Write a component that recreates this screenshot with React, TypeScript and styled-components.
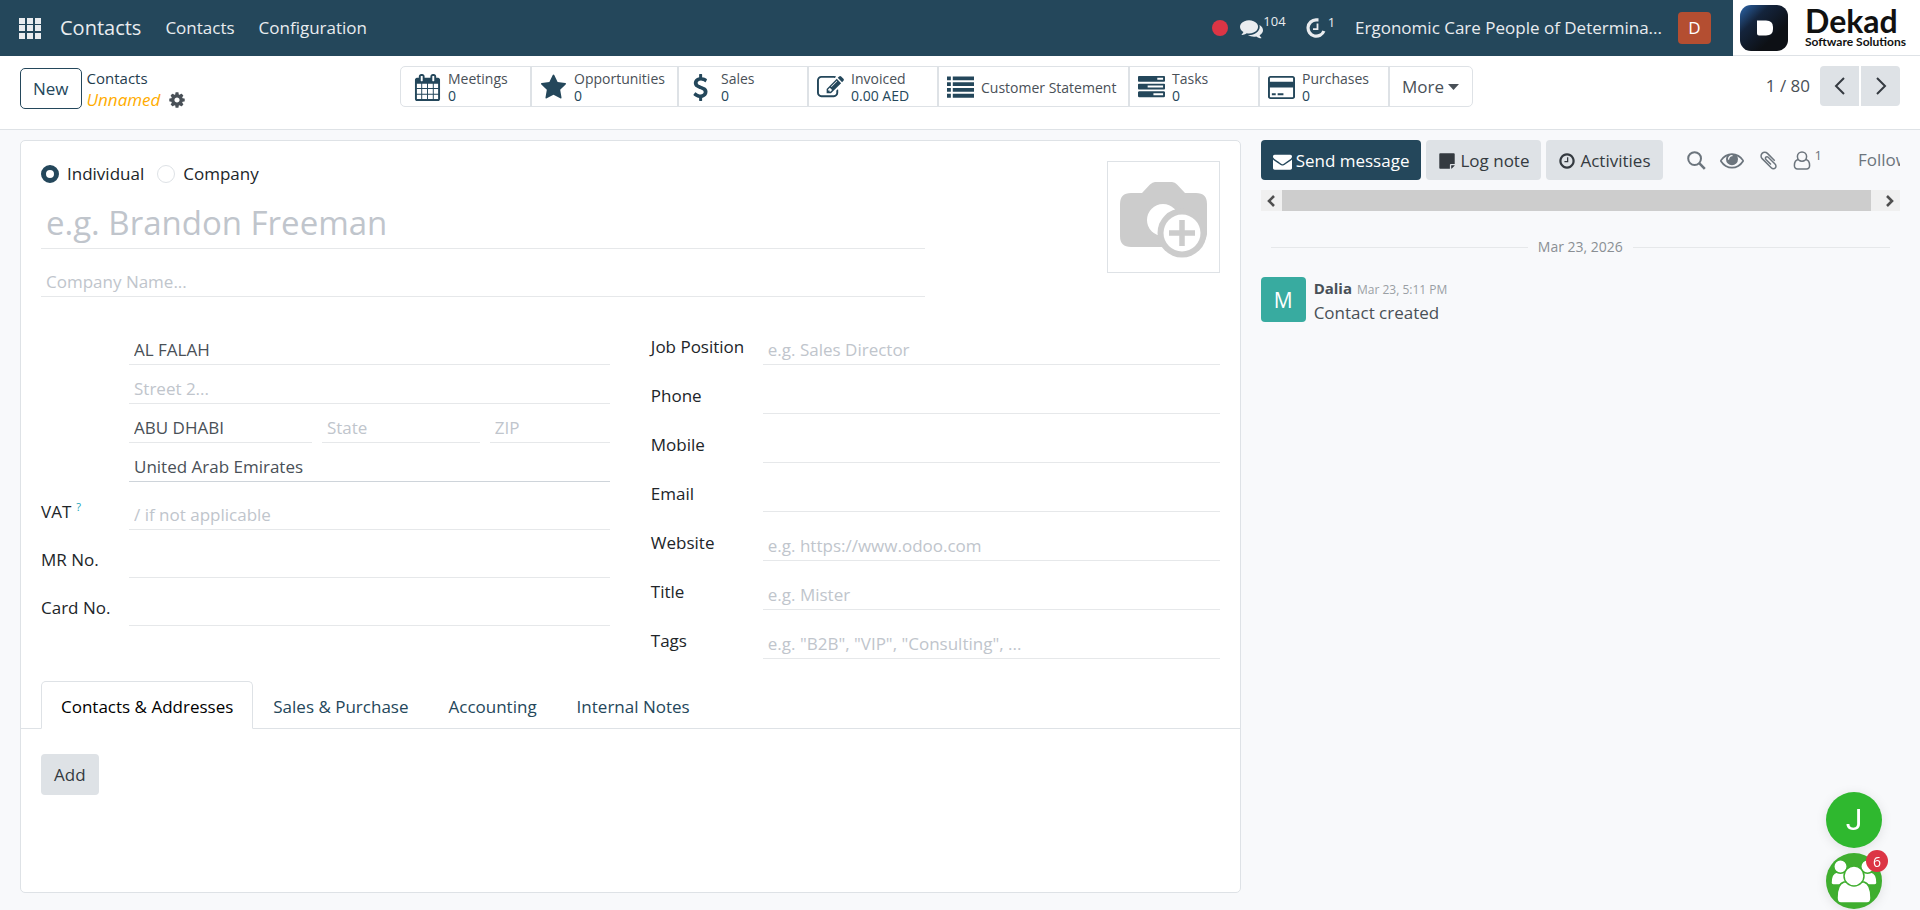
import React, { useState } from "react";
import styled, { createGlobalStyle } from "styled-components";

const GlobalStyle = createGlobalStyle`
  *, *::before, *::after { box-sizing: border-box; }
  body {
    margin: 0;
    background: #f8f9fb;
    color: #495057;
    font-family: "Open Sans", "Noto Sans", sans-serif;
    font-size: 17px;
    line-height: 24px;
  }
  button, input { font: inherit; color: inherit; }
  button { cursor: pointer; }
  a { color: inherit; text-decoration: none; }
`;

const brand = "#24475b";
const line = "#e6e8ea";
const border = "#dee2e6";

/* ---------- icons ---------- */

const paths = {
  calendar:
    "M192 1664h288v-288h-288v288zm352 0h320v-288h-320v288zm-352-352h288v-320h-288v320zm352 0h320v-320h-320v320zm-352-384h288v-288h-288v288zm736 736h320v-288h-320v288zm-384-736h320v-288h-320v288zm768 736h288v-288h-288v288zm-384-352h320v-320h-320v320zm-352-864v-288q0-13-9.5-22.5t-22.5-9.5h-64q-13 0-22.5 9.5t-9.5 22.5v288q0 13 9.5 22.5t22.5 9.5h64q13 0 22.5-9.5t9.5-22.5zm736 864h288v-320h-288v320zm-384-384h320v-288h-320v288zm384 0h288v-288h-288v288zm32-480v-288q0-13-9.5-22.5t-22.5-9.5h-64q-13 0-22.5 9.5t-9.5 22.5v288q0 13 9.5 22.5t22.5 9.5h64q13 0 22.5-9.5t9.5-22.5zm384-64v1280q0 52-38 90t-90 38h-1408q-52 0-90-38t-38-90v-1280q0-52 38-90t90-38h128v-96q0-66 47-113t113-47h64q66 0 113 47t47 113v96h384v-96q0-66 47-113t113-47h64q66 0 113 47t47 113v96h128q52 0 90 38t38 90z",
  star:
    "M1728 647q0 22-26 48l-363 354 86 500q1 7 1 20 0 21-10.5 35.5t-30.5 14.5q-19 0-40-12l-449-236-449 236q-22 12-40 12-21 0-31.5-14.5t-10.5-35.5q0-6 2-20l86-500-364-354q-25-27-25-48 0-37 56-46l502-73 225-455q19-41 49-41t49 41l225 455 502 73q56 9 56 46z",
  dollar:
    "M1362 1185q0 153-99.5 263.5t-258.5 136.5v175q0 14-9 23t-23 9h-135q-13 0-22.5-9.5t-9.5-22.5v-175q-66-9-127.5-31t-101.5-44.5-74-48-46.5-37.5-17.5-18q-17-21-2-41l103-135q7-10 23-12 15-2 24 9l2 2q113 99 243 125 37 8 74 8 81 0 142.5-43t61.5-122q0-28-15-53t-33.5-42-58.5-37.5-66-32-80-32.5q-39-16-61.5-25t-61.5-26.5-62.5-31-56.5-35.5-53.5-42.5-43.5-49-35.5-58-21-66.5-8.5-78q0-138 98-242t255-134v-180q0-13 9.5-22.5t22.5-9.5h135q14 0 23 9t9 23v176q57 6 110.5 23t87 33.5 63.5 37.5 39 29 15 14q17 18 5 38l-81 146q-8 15-23 16-14 3-27-7-3-3-14.5-12t-39-26.5-58.5-32-74.5-26-85.5-11.5q-95 0-155 43t-60 111q0 26 8.5 48t29.5 41.5 39.5 33 56 31 60.5 27 70 27.5q53 20 81 31.5t76 35 75.5 42.5 62 50 53 63.5 31.5 76.5 13 94z",
  edit:
    "M888 1184l116-116-152-152-116 116v56h96v96h56zm440-720q-16-16-33 1l-350 350q-17 17-1 33t33-1l350-350q17-17 1-33zm80 594v190q0 119-84.5 203.5t-203.5 84.5h-832q-119 0-203.5-84.5t-84.5-203.5v-832q0-119 84.5-203.5t203.5-84.5h832q63 0 117 25 15 7 18 23 3 17-9 29l-49 49q-14 14-32 8-23-6-45-6h-832q-66 0-113 47t-47 113v832q0 66 47 113t113 47h832q66 0 113-47t47-113v-126q0-13 9-22l64-64q15-15 35-7t20 29zm-96-738l288 288-672 672h-288v-288zm444 132l-92 92-288-288 92-92q28-28 68-28t68 28l152 152q28 28 28 68t-28 68z",
  list:
    "M0 160h256v256h-256zM384 160h1408v256h-1408zM0 544h256v256h-256zM384 544h1408v256h-1408zM0 928h256v256h-256zM384 928h1408v256h-1408zM0 1312h256v256h-256zM384 1312h1408v256h-1408z",
  tasks:
    "M1024 1408h640v-128h-640v128zm-384-512h1024v-128h-1024v128zm640-512h384v-128h-384v128zm512 832v256q0 26-19 45t-45 19h-1664q-26 0-45-19t-19-45v-256q0-26 19-45t45-19h1664q26 0 45 19t19 45zm0-512v256q0 26-19 45t-45 19h-1664q-26 0-45-19t-19-45v-256q0-26 19-45t45-19h1664q26 0 45 19t19 45zm0-512v256q0 26-19 45t-45 19h-1664q-26 0-45-19t-19-45v-256q0-26 19-45t45-19h1664q26 0 45 19t19 45z",
  card:
    "M1632 128q66 0 113 47t47 113v1216q0 66-47 113t-113 47h-1472q-66 0-113-47t-47-113v-1216q0-66 47-113t113-47h1472zm-1472 128q-13 0-22.5 9.5t-9.5 22.5v224h1536v-224q0-13-9.5-22.5t-22.5-9.5h-1472zm1472 1280q13 0 22.5-9.5t9.5-22.5v-608h-1536v608q0 13 9.5 22.5t22.5 9.5h1472zm-1376-128v-128h256v128h-256zm384 0v-128h384v128h-384z",
  gear:
    "M1152 896q0-106-75-181t-181-75-181 75-75 181 75 181 181 75 181-75 75-181zm512-109v222q0 12-8 23t-20 13l-185 28q-19 54-39 91 35 50 107 138 10 12 10 25t-9 23q-27 37-99 108t-94 71q-12 0-26-9l-138-108q-44 23-91 38-16 136-29 186-7 28-36 28h-222q-14 0-24.5-8.5t-11.5-21.5l-28-184q-49-16-90-37l-141 107q-10 9-25 9-14 0-25-11-126-114-165-168-7-10-7-23 0-12 8-23 15-21 51-66.5t54-70.5q-27-50-41-99l-183-27q-13-2-21-12.5t-8-23.5v-222q0-12 8-23t19-13l186-28q14-46 39-92-40-57-107-138-10-12-10-24 0-10 9-23 26-36 98.5-107.5t94.5-71.5q13 0 26 10l138 107q44-23 91-38 16-136 29-186 7-28 36-28h222q14 0 24.5 8.5t11.5 21.5l28 184q49 16 90 37l142-107q9-9 24-9 13 0 25 10 129 119 165 170 7 8 7 22 0 12-8 23-15 21-51 66.5t-54 70.5q26 50 41 98l183 28q13 2 21 12.5t8 23.5z",
  comments:
    "M1408 768q0 139-94 257t-256.5 186.5-353.5 68.5q-86 0-176-16-124 88-278 128-36 9-86 16h-3q-11 0-20.5-8t-11.5-21q-1-3-1-6.5t.5-6.5 2-6l2.5-5 3.5-5.5 4-5 4.5-5 4-4.5q5-6 23-25t26-29.5 22.5-29 25-38.5 20.5-44q-124-72-195-177t-71-224q0-139 94-257t256.5-186.5 353.5-68.5 353.5 68.5 256.5 186.5 94 257zm384 256q0 120-71 224.5t-195 176.5q10 24 20.5 44t25 38.5 22.5 29 26 29.5 23 25q1 1 4 4.5t4.5 5 4 5 3.5 5.5l2.5 5 2 6 .5 6.5-1 6.5q-3 14-13 22t-22 7q-50-7-86-16-154-40-278-128-90 16-176 16-271 0-472-132 58 4 88 4 161 0 309-45t264-129q125-92 192-212t67-254q0-77-23-152 129 71 204 178t75 230z",
  envelope:
    "M1792 710v794q0 66-47 113t-113 47h-1472q-66 0-113-47t-47-113v-794q44 49 101 87 362 246 497 345 57 42 92.5 65.5t94.5 48 110 24.5h2q51 0 110-24.5t94.5-48 92.5-65.5q170-123 498-345 57-39 100-87zm0-294q0 79-49 151t-122 123q-376 261-468 325-10 7-42.5 31t-54 38.5-52 32.5-57.5 27-50 9h-2q-23 0-50-9t-57.5-27-52-32.5-54-38.5-42.5-31q-91-64-262-182.5t-205-142.5q-62-42-117-115.5t-55-136.5q0-78 41.5-130t118.5-52h1472q65 0 112.5 47t47.5 113z",
  note:
    "M224 128h1344q40 0 68 28t28 68v960h-384q-40 0-68 28t-28 68v384h-960q-40 0-68-28t-28-68v-1344q0-40 28-68t68-28zM1312 1312h350q-8 56-40 90l-222 222q-34 32-88 40z",
  clock:
    "M1024 544v448q0 14-9 23t-23 9h-320q-14 0-23-9t-9-23v-64q0-14 9-23t23-9h224v-352q0-14 9-23t23-9h64q14 0 23 9t9 23zm416 352q0-148-73-273t-198-198-273-73-273 73-198 198-73 273 73 273 198 198 273 73 273-73 198-198 73-273zm224 0q0 209-103 385.5t-279.5 279.5-385.5 103-385.5-103-279.5-279.5-103-385.5 103-385.5 279.5-279.5 385.5-103 385.5 103 279.5 279.5 103 385.5z",
  eye:
    "M1664 960q-152-236-381-353 61 104 61 225 0 185-131.5 316.5t-316.5 131.5-316.5-131.5-131.5-316.5q0-121 61-225-229 117-381 353 133 205 333.5 326.5t434.5 121.5 434.5-121.5 333.5-326.5zm-720-384q0-20-14-34t-34-14q-125 0-214.5 89.5t-89.5 214.5q0 20 14 34t34 14 34-14 14-34q0-86 61-147t147-61q20 0 34-14t14-34zm848 384q0 34-20 69-140 230-376.5 368.5t-499.5 138.5-499.5-139-376.5-368q-20-35-20-69t20-69q140-229 376.5-368t499.5-139 499.5 139 376.5 368q20 35 20 69z",
  clip:
    "M1596 1385q0 117-79 196t-196 79q-135 0-235-100l-777-776q-113-115-113-271 0-159 110-270t269-111q158 0 273 113l605 606q10 10 10 22 0 16-30.5 46.5t-46.5 30.5q-13 0-23-10l-606-607q-79-77-181-77-106 0-179 75t-73 181q0 105 76 181l776 777q63 63 145 63 64 0 106-42t42-106q0-82-63-145l-581-581q-26-24-60-24-29 0-48 19t-19 48q0 32 25 59l410 410q10 10 10 22 0 16-31 47t-47 31q-12 0-22-10l-410-410q-63-61-63-149 0-82 57-139t139-57q88 0 149 63l581 581q100 98 100 235z",
};

type IconName = keyof typeof paths;

const Svg = styled.svg`
  display: block;
  flex: none;
`;

const Icon = ({ name, size }: { name: IconName; size: number }) => (
  <Svg width={size} height={size} viewBox="0 0 1792 1792" fill="currentColor" aria-hidden="true">
    <path d={paths[name]} />
  </Svg>
);

const AppsIcon = () => (
  <Svg width="22" height="21" viewBox="0 0 22 21" fill="#e9ecef" aria-hidden="true">
    {[0, 8, 16].map((x) => [0, 7, 15].map((y) => <rect key={`${x}-${y}`} x={x} y={y} width="6" height="6" />))}
  </Svg>
);

const ActivityIcon = () => (
  <Svg width="20" height="20" viewBox="0 0 20 20" fill="none" stroke="currentColor" aria-hidden="true">
    <path d="M12.500 1.800H10A8.200 8.200 0 1 0 17.900 13" strokeWidth="3.2" />
    <path d="M11.500 5.500V11.200H7" strokeWidth="1.800" />
  </Svg>
);

const SearchIcon = () => (
  <Svg width="19" height="19" viewBox="0 0 19 19" fill="none" stroke="currentColor" strokeWidth="2" aria-hidden="true">
    <circle cx="7.6" cy="7.6" r="6.4" />
    <path d="M12.2 12.2l5.6 5.6" strokeWidth="2.6" />
  </Svg>
);

const UserIcon = () => (
  <Svg width="18" height="19" viewBox="0 0 18 19" fill="none" stroke="currentColor" strokeWidth="1.5" aria-hidden="true">
    <circle cx="9" cy="5.6" r="4.6" />
    <path d="M5.4 8.6C2.6 9 1.4 11.600 1.400 14.600C1.400 16.800 2.600 18 4.600 18H13.400C15.400 18 16.600 16.800 16.600 14.600C16.600 11.600 15.400 9 12.600 8.600" />
  </Svg>
);

const Chevron = ({ dir }: { dir: "left" | "right" }) => (
  <Svg width="12" height="18" viewBox="0 0 12 18" fill="none" stroke="#343a40" strokeWidth="2" aria-hidden="true">
    <path d={dir === "left" ? "M10 1L2 9l8 8" : "M2 1l8 8-8 8"} />
  </Svg>
);

const ScrollArrow = ({ dir }: { dir: "left" | "right" }) => (
  <Svg width="8" height="12" viewBox="0 0 8 12" fill="none" stroke="#4f4f4f" strokeWidth="2.600" aria-hidden="true">
    <path d={dir === "left" ? "M7 1L2 6l5 5" : "M1 1l5 5-5 5"} />
  </Svg>
);

const Caret = () => (
  <Svg width="11" height="6" viewBox="0 0 11 6" fill="currentColor" aria-hidden="true">
    <path d="M0 0h11L5.500 6z" />
  </Svg>
);

const CameraIcon = () => (
  <Svg width="88" height="76" viewBox="0 0 88 76" aria-hidden="true">
    <path
      d="M11 11H22L30 2.500Q32.500 0 35 0H52Q55 0 57 2.500L65 11H76Q87 11 87 22V52A25 25 0 0 1 44 65H11Q0 65 0 54V22Q0 11 11 11Z"
      fill="#ccc"
    />
    <circle cx="43" cy="38" r="16" fill="#fff" />
    <circle cx="62" cy="51" r="24.500" fill="#ccc" />
    <circle cx="62" cy="51" r="18.500" fill="#fff" />
    <path d="M62 38V64M49 51H75" stroke="#ccc" strokeWidth="5.500" />
  </Svg>
);

const LogoMark = () => (
  <Svg width="48" height="46" viewBox="0 0 48 46" aria-hidden="true">
    <defs>
      <linearGradient id="mark" x1="0" y1="0" x2="0.700" y2="0.700">
        <stop offset="0" stopColor="#2c66ab" />
        <stop offset="0.450" stopColor="#14243c" />
        <stop offset="1" stopColor="#0d1015" />
      </linearGradient>
    </defs>
    <rect width="48" height="46" rx="11" fill="url(#mark)" />
    <path d="M17 15.500H26Q33 15.500 33 22V24Q33 30.500 26 30.500H19Q17 30.500 17 28.500Z" fill="#fff" />
  </Svg>
);

const GroupIcon = () => (
  <Svg width="56" height="56" viewBox="0 0 56 56" fill="#fff" stroke="#3fae2f" strokeWidth="1.500" aria-hidden="true">
    <path d="M5 30Q5 20 11 19H20Q24 20 24 26V32H9Q5 32 5 30Z" />
    <path d="M51 30Q51 20 45 19H36Q32 20 32 26V32H47Q51 32 51 30Z" />
    <circle cx="14.500" cy="13.500" r="6.700" />
    <circle cx="41.500" cy="13.500" r="6.700" />
    <path d="M11 45Q11 31 18 29H38Q45 31 45 45Q45 50 41 50H15Q11 50 11 45Z" />
    <circle cx="28" cy="23" r="10" />
  </Svg>
);

/* ---------- page ---------- */

const Page = styled.div`
  display: flex;
  flex-direction: column;
  min-height: 100vh;
`;

const Navbar = styled.header`
  display: flex;
  align-items: stretch;
  height: 56px;
  background: ${brand};
  color: #e9ecef;
`;

const NavLeft = styled.nav`
  display: flex;
  align-items: center;
  flex: 1;
  gap: 24px;
  padding-left: 19px;
`;

const PlainButton = styled.button`
  display: flex;
  align-items: center;
  gap: 4px;
  padding: 0;
  border: 0;
  background: none;
  white-space: nowrap;
`;

const AppName = styled.a`
  margin-left: -5px;
  font-size: 20px;
`;

const NavRight = styled.div`
  display: flex;
  align-items: center;
  gap: 20px;
  padding-right: 22px;
`;

const RecordDot = styled.span`
  width: 16px;
  height: 16px;
  margin-right: -8px;
  border-radius: 50%;
  background: #dc3545;
`;

const Counter = styled(PlainButton)<{ $gap: number }>`
  gap: ${(p) => p.$gap}px;
`;

const Count = styled.span`
  align-self: flex-start;
  margin-top: -3px;
  font-size: 13px;
  line-height: 14px;
`;

const Company = styled.span`
  white-space: nowrap;
`;

const UserBadge = styled.button`
  width: 33px;
  height: 32px;
  margin-left: -4px;
  padding: 0;
  border: 0;
  border-radius: 4px;
  background: #b44e31;
  color: #fff;
`;

const Logo = styled.a`
  display: flex;
  align-items: center;
  gap: 17px;
  width: 187px;
  padding-left: 7px;
  border-bottom: 1px solid ${border};
  background: #fff;
  color: #111;
  font-family: Lato, sans-serif;
`;

const LogoText = styled.span`
  display: flex;
  flex-direction: column;
  font-size: 12px;
  font-weight: 700;
  line-height: 14px;
  white-space: nowrap;
`;

const LogoName = styled.span`
  font-size: 32px;
  line-height: 29px;
`;

/* ---------- control panel ---------- */

const ControlPanel = styled.div`
  display: flex;
  align-items: flex-start;
  height: 74px;
  padding: 10px 20px 0;
  border-bottom: 1px solid ${border};
  background: #fff;
`;

const PanelLeft = styled.div`
  display: flex;
  align-items: center;
  gap: 5px;
  width: 380px;
`;

const NewButton = styled.button`
  height: 41px;
  padding: 1px 12px 0;
  border: 1px solid ${brand};
  border-radius: 5px;
  background: #fff;
  color: ${brand};
`;

const Crumbs = styled.div`
  display: flex;
  flex-direction: column;
  padding-top: 2px;
  font-size: 15px;
  line-height: 21px;
`;

const CrumbLink = styled.a`
  color: #1f3c4e;
`;

const Current = styled.div`
  display: flex;
  align-items: center;
  gap: 8px;
  font-size: 17px;
  em { color: #ffac00; }
`;

const Stats = styled.div`
  display: flex;
  height: 41px;
  border: 1px solid ${border};
  border-radius: 5px;
`;

const StatButton = styled.button<{ $width: number; $inset: number }>`
  display: flex;
  align-items: center;
  gap: 7px;
  width: ${(p) => p.$width}px;
  padding: 1px 0 0 ${(p) => p.$inset}px;
  border: 0;
  border-right: 2px solid ${border};
  background: none;
  color: ${brand};
  font-size: 14px;
  line-height: 17px;
  text-align: left;
  white-space: nowrap;
`;

const StatText = styled.span`
  display: flex;
  flex-direction: column;
  span { color: #495057; }
`;

const MoreButton = styled(PlainButton)`
  padding: 1px 13px 0 12px;
`;

const Pager = styled.div`
  display: flex;
  align-items: center;
  gap: 2px;
  margin-left: auto;
`;

const PagerText = styled.span`
  margin-right: 8px;
`;

const PagerButton = styled.button<{ $side: "left" | "right" }>`
  display: grid;
  place-items: center;
  width: 39px;
  height: 40px;
  padding: 0;
  border: 0;
  border-radius: ${(p) => (p.$side === "left" ? "4px 0 0 4px" : "0 4px 4px 0")};
  background: ${border};
`;

/* ---------- form ---------- */

const Main = styled.main`
  display: grid;
  flex: 1;
  grid-template-columns: minmax(0, 21fr) minmax(0, 11fr);
  gap: 20px;
  padding: 10px 20px 17px;
`;

const Sheet = styled.form`
  display: flex;
  flex-direction: column;
  border: 1px solid ${border};
  border-radius: 5px;
  background: #fff;
`;

const SheetTop = styled.div`
  display: flex;
  align-items: flex-start;
  justify-content: space-between;
  padding: 20px 20px 0;
`;

const TitleBlock = styled.div`
  width: 75%;
`;

const Radios = styled.div`
  display: flex;
  gap: 13px;
  padding-top: 1px;
`;

const RadioLabel = styled.label`
  display: flex;
  align-items: center;
  gap: 8px;
  color: #212529;
`;

const Radio = styled.input`
  appearance: none;
  width: 18px;
  height: 18px;
  margin: 0;
  border: 1px solid ${border};
  border-radius: 50%;
  background: #fff;
  &:checked { border: 5px solid ${brand}; }
`;

const Input = styled.input<{ $strong?: boolean }>`
  display: block;
  width: 100%;
  min-width: 0;
  height: 34px;
  padding: 3px 5px 0;
  border: 0;
  border-bottom: 1px solid ${(p) => (p.$strong ? "#ced4da" : line)};
  background: none;
  outline: none;
  text-overflow: ellipsis;
  &::placeholder { color: #c0c5cc; opacity: 1; }
`;

const NameInput = styled(Input)`
  height: 55px;
  margin: 8px 0 14px;
  font-size: 33px;
`;

const Photo = styled.button`
  display: grid;
  place-items: center;
  width: 113px;
  height: 112px;
  padding: 5px 0 0 2px;
  border: 1px solid ${border};
  background: #fff;
`;

const Groups = styled.div`
  display: grid;
  grid-template-columns: 1fr 1fr;
  gap: 41px;
  padding: 34px 20px 0;
`;

const Group = styled.div<{ $label: number; $gap: number }>`
  display: grid;
  grid-template-columns: ${(p) => p.$label}px minmax(0, 1fr);
  align-content: start;
  align-items: end;
  row-gap: ${(p) => p.$gap}px;
`;

const FieldLabel = styled.label`
  align-self: start;
  padding-top: 4px;
  color: #212529;
  sup {
    margin-left: 5px;
    color: #17a2b8;
    font-size: 11px;
    line-height: 0;
    vertical-align: 7px;
  }
`;

const Address = styled.div`
  display: grid;
  grid-column: 2;
  grid-template-columns: 183fr 158fr 120fr;
  gap: 5px 10px;
`;

const Wide = styled.div`
  grid-column: 1 / -1;
`;

const Tabs = styled.div`
  display: flex;
  margin-top: 22px;
  padding: 0 20px;
  border-bottom: 1px solid ${border};
`;

const Tab = styled.button<{ $active: boolean }>`
  height: 48px;
  margin-bottom: -1px;
  padding: 3px 19px 0;
  border: 1px solid ${(p) => (p.$active ? border : "transparent")};
  border-bottom-color: ${(p) => (p.$active ? "#fff" : "transparent")};
  border-radius: 5px 5px 0 0;
  background: ${(p) => (p.$active ? "#fff" : "none")};
  color: ${(p) => (p.$active ? "#000" : brand)};
`;

const TabBody = styled.div`
  padding: 25px 20px;
`;

const AddButton = styled.button`
  height: 41px;
  padding: 1px 13px 0;
  border: 0;
  border-radius: 4px;
  background: ${border};
  color: #343a40;
`;

/* ---------- chatter ---------- */

const Chatter = styled.aside`
  min-width: 0;
`;

const ChatBar = styled.div`
  display: flex;
  align-items: center;
  gap: 5px;
  overflow: hidden;
  white-space: nowrap;
`;

const ChatButton = styled.button<{ $primary?: boolean }>`
  display: flex;
  flex: none;
  align-items: center;
  gap: 4px;
  height: 40px;
  padding: 2px 12px 0;
  border: 0;
  border-radius: 4px;
  background: ${(p) => (p.$primary ? brand : border)};
  color: ${(p) => (p.$primary ? "#fff" : "#343a40")};
`;

const ChatTools = styled.div`
  display: flex;
  flex: none;
  align-items: center;
  gap: 14px;
  padding-left: 19px;
  color: #6c757d;
`;

const Followers = styled(Counter)`
  margin-right: 22px;
`;

const ScrollBar = styled.div`
  display: flex;
  align-items: center;
  height: 21px;
  margin-top: 10px;
  background: #f0f0f0;
`;

const ScrollEnd = styled.span`
  display: grid;
  flex: none;
  place-items: center;
  width: 21px;
`;

const Thumb = styled.span`
  width: 589px;
  height: 21px;
  margin-right: auto;
  background: #cdcdcd;
`;

const DateLine = styled.div`
  display: flex;
  align-items: center;
  gap: 10px;
  padding: 24px 10px 0;
  color: #8a8f94;
  font-size: 14px;
  &::before, &::after {
    content: "";
    flex: 1;
    height: 1px;
    background: ${line};
  }
`;

const Message = styled.article`
  display: flex;
  gap: 8px;
  margin-top: 18px;
`;

const Avatar = styled.span`
  display: grid;
  place-items: center;
  width: 45px;
  height: 45px;
  border-radius: 4px;
  background: #38aba0;
  color: #fff;
  font-size: 21px;
`;

const MessageHead = styled.div`
  line-height: 22px;
  b { font-size: 15px; }
  time {
    margin-left: 5px;
    color: #9a9fa4;
    font-size: 12px;
  }
`;

/* ---------- chat bubbles ---------- */

const Bubbles = styled.div`
  position: fixed;
  right: 38px;
  bottom: 1px;
  display: flex;
  flex-direction: column;
  gap: 5px;
`;

const Bubble = styled.button<{ $bg: string }>`
  position: relative;
  display: grid;
  place-items: center;
  width: 56px;
  height: 56px;
  padding: 0;
  border: 0;
  border-radius: 50%;
  background: ${(p) => p.$bg};
  box-shadow: 0 2px 12px rgba(0, 0, 0, 0.1);
  color: #fff;
  font-family: Roboto, sans-serif;
  font-size: 30px;
`;

const Badge = styled.span`
  position: absolute;
  top: -3px;
  right: -6px;
  width: 22px;
  height: 22px;
  border-radius: 50%;
  background: #dc3545;
  font-family: "Open Sans", sans-serif;
  font-size: 14px;
  line-height: 23px;
`;

const stats: { icon: IconName; label: string; value?: string; width: number; inset: number }[] = [
  { icon: "calendar", label: "Meetings", value: "0", width: 131, inset: 13 },
  { icon: "star", label: "Opportunities", value: "0", width: 147, inset: 8 },
  { icon: "dollar", label: "Sales", value: "0", width: 130, inset: 8 },
  { icon: "edit", label: "Invoiced", value: "0.00 AED", width: 130, inset: 8 },
  { icon: "list", label: "Customer Statement", width: 191, inset: 8 },
  { icon: "tasks", label: "Tasks", value: "0", width: 130, inset: 8 },
  { icon: "card", label: "Purchases", value: "0", width: 130, inset: 8 },
];

const rightFields = [
  { label: "Job Position", hint: "e.g. Sales Director" },
  { label: "Phone" },
  { label: "Mobile" },
  { label: "Email" },
  { label: "Website", hint: "e.g. https://www.odoo.com" },
  { label: "Title", hint: "e.g. Mister" },
  { label: "Tags", hint: 'e.g. "B2B", "VIP", "Consulting", ...' },
];

const tabs = ["Contacts & Addresses", "Sales & Purchase", "Accounting", "Internal Notes"];

const slug = (text: string) => text.toLowerCase().replace(/\W+/g, "-");

export default function App() {
  const [tab, setTab] = useState(tabs[0]);

  return (
    <Page>
      <GlobalStyle />
      <Navbar>
        <NavLeft>
          <PlainButton aria-label="Apps">
            <AppsIcon />
          </PlainButton>
          <AppName href="#">Contacts</AppName>
          <a href="#">Contacts</a>
          <a href="#">Configuration</a>
        </NavLeft>
        <NavRight>
          <RecordDot />
          <Counter $gap={0} aria-label="Messages">
            <Icon name="comments" size={23} />
            <Count>104</Count>
          </Counter>
          <Counter $gap={2} aria-label="Activities">
            <ActivityIcon />
            <Count>1</Count>
          </Counter>
          <Company>Ergonomic Care People of Determina...</Company>
          <UserBadge>D</UserBadge>
        </NavRight>
        <Logo href="#">
          <LogoMark />
          <LogoText>
            <LogoName>Dekad</LogoName>
            Software Solutions
          </LogoText>
        </Logo>
      </Navbar>

      <ControlPanel>
        <PanelLeft>
          <NewButton>New</NewButton>
          <Crumbs>
            <CrumbLink href="#">Contacts</CrumbLink>
            <Current>
              <em>Unnamed</em>
              <PlainButton aria-label="Actions">
                <Icon name="gear" size={18} />
              </PlainButton>
            </Current>
          </Crumbs>
        </PanelLeft>
        <Stats>
          {stats.map((s) => (
            <StatButton key={s.label} $width={s.width} $inset={s.inset}>
              <Icon name={s.icon} size={27} />
              <StatText>
                <span>{s.label}</span>
                {s.value}
              </StatText>
            </StatButton>
          ))}
          <MoreButton>
            More <Caret />
          </MoreButton>
        </Stats>
        <Pager>
          <PagerText>1 / 80</PagerText>
          <PagerButton $side="left" aria-label="Previous">
            <Chevron dir="left" />
          </PagerButton>
          <PagerButton $side="right" aria-label="Next">
            <Chevron dir="right" />
          </PagerButton>
        </Pager>
      </ControlPanel>

      <Main>
        <Sheet onSubmit={(e) => e.preventDefault()}>
          <SheetTop>
            <TitleBlock>
              <Radios>
                <RadioLabel>
                  <Radio type="radio" name="kind" defaultChecked />
                  Individual
                </RadioLabel>
                <RadioLabel>
                  <Radio type="radio" name="kind" />
                  Company
                </RadioLabel>
              </Radios>
              <NameInput aria-label="Name" placeholder="e.g. Brandon Freeman" />
              <Input aria-label="Company name" placeholder="Company Name..." />
            </TitleBlock>
            <Photo type="button" aria-label="Upload photo">
              <CameraIcon />
            </Photo>
          </SheetTop>

          <Groups>
            <Group $label={88} $gap={14}>
              <Address>
                <Wide>
                  <Input aria-label="Street" defaultValue="AL FALAH" />
                </Wide>
                <Wide>
                  <Input aria-label="Street 2" placeholder="Street 2..." />
                </Wide>
                <Input aria-label="City" defaultValue="ABU DHABI" />
                <Input aria-label="State" placeholder="State" />
                <Input aria-label="ZIP" placeholder="ZIP" />
                <Wide>
                  <Input aria-label="Country" defaultValue="United Arab Emirates" $strong />
                </Wide>
              </Address>
              <FieldLabel htmlFor="vat">
                VAT<sup>?</sup>
              </FieldLabel>
              <Input id="vat" placeholder="/ if not applicable" />
              <FieldLabel htmlFor="mr">MR No.</FieldLabel>
              <Input id="mr" />
              <FieldLabel htmlFor="card">Card No.</FieldLabel>
              <Input id="card" />
            </Group>
            <Group $label={112} $gap={15}>
              {rightFields.map((f) => (
                <React.Fragment key={f.label}>
                  <FieldLabel htmlFor={slug(f.label)}>{f.label}</FieldLabel>
                  <Input id={slug(f.label)} placeholder={f.hint} />
                </React.Fragment>
              ))}
            </Group>
          </Groups>

          <Tabs role="tablist">
            {tabs.map((t) => (
              <Tab key={t} type="button" role="tab" aria-selected={t === tab} $active={t === tab} onClick={() => setTab(t)}>
                {t}
              </Tab>
            ))}
          </Tabs>
          <TabBody>
            <AddButton type="button">Add</AddButton>
          </TabBody>
        </Sheet>

        <Chatter>
          <ChatBar>
            <ChatButton $primary>
              <Icon name="envelope" size={19} />
              Send message
            </ChatButton>
            <ChatButton>
              <Icon name="note" size={18} />
              Log note
            </ChatButton>
            <ChatButton>
              <Icon name="clock" size={18} />
              Activities
            </ChatButton>
            <ChatTools>
              <PlainButton aria-label="Search messages">
                <SearchIcon />
              </PlainButton>
              <PlainButton aria-label="Preview">
                <Icon name="eye" size={24} />
              </PlainButton>
              <PlainButton aria-label="Attach files">
                <Icon name="clip" size={21} />
              </PlainButton>
              <Followers $gap={4} aria-label="Followers">
                <UserIcon />
                <Count>1</Count>
              </Followers>
              <PlainButton>Follow</PlainButton>
            </ChatTools>
          </ChatBar>
          <ScrollBar>
            <ScrollEnd>
              <ScrollArrow dir="left" />
            </ScrollEnd>
            <Thumb />
            <ScrollEnd>
              <ScrollArrow dir="right" />
            </ScrollEnd>
          </ScrollBar>
          <DateLine>Mar 23, 2026</DateLine>
          <Message>
            <Avatar>M</Avatar>
            <div>
              <MessageHead>
                <b>Dalia</b>
                <time>Mar 23, 5:11 PM</time>
              </MessageHead>
              Contact created
            </div>
          </Message>
        </Chatter>
      </Main>

      <Bubbles>
        <Bubble $bg="#2fb82f" aria-label="Chat with J">
          J
        </Bubble>
        <Bubble $bg="#3fae2f" aria-label="Group chat">
          <GroupIcon />
          <Badge>6</Badge>
        </Bubble>
      </Bubbles>
    </Page>
  );
}
